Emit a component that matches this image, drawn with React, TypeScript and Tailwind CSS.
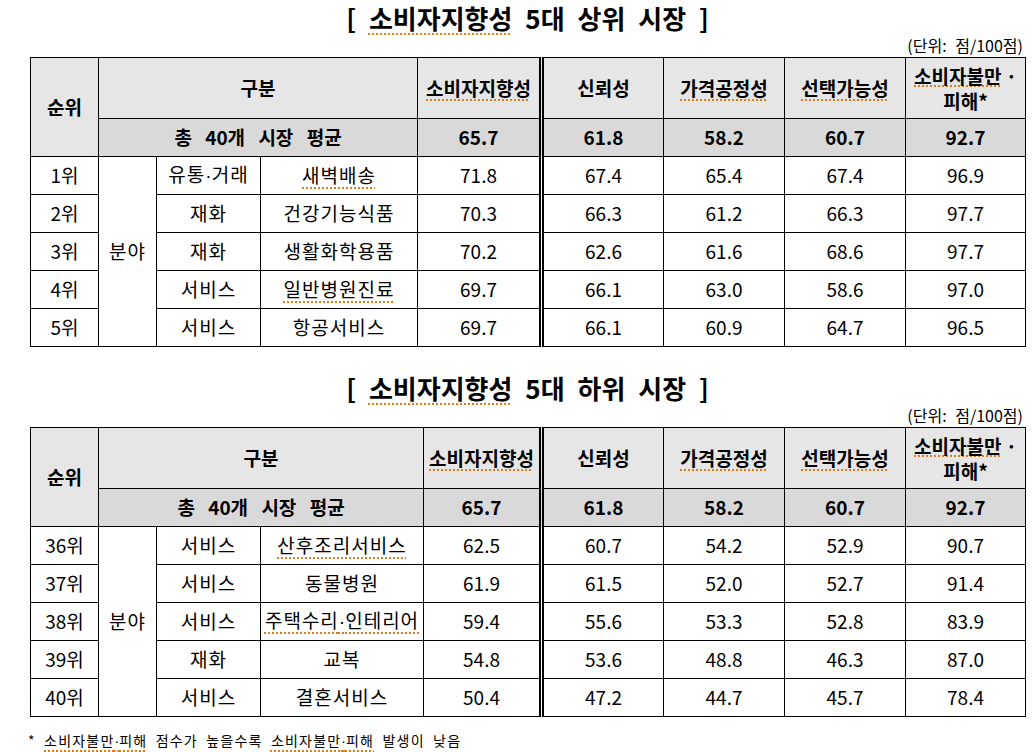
import React from "react"

type Row = {
  rank: string
  type: string
  market: string
  mark?: boolean
  vals: string[]
}

const upper: Row[] = [
  { rank: "1위", type: "유통·거래", market: "새벽배송", mark: true, vals: ["71.8", "67.4", "65.4", "67.4", "96.9"] },
  { rank: "2위", type: "재화", market: "건강기능식품", vals: ["70.3", "66.3", "61.2", "66.3", "97.7"] },
  { rank: "3위", type: "재화", market: "생활화학용품", vals: ["70.2", "62.6", "61.6", "68.6", "97.7"] },
  { rank: "4위", type: "서비스", market: "일반병원진료", mark: true, vals: ["69.7", "66.1", "63.0", "58.6", "97.0"] },
  { rank: "5위", type: "서비스", market: "항공서비스", vals: ["69.7", "66.1", "60.9", "64.7", "96.5"] },
]

const lower: Row[] = [
  { rank: "36위", type: "서비스", market: "산후조리서비스", mark: true, vals: ["62.5", "60.7", "54.2", "52.9", "90.7"] },
  { rank: "37위", type: "서비스", market: "동물병원", vals: ["61.9", "61.5", "52.0", "52.7", "91.4"] },
  { rank: "38위", type: "서비스", market: "주택수리·인테리어", mark: true, vals: ["59.4", "55.6", "53.3", "52.8", "83.9"] },
  { rank: "39위", type: "재화", market: "교복", vals: ["54.8", "53.6", "48.8", "46.3", "87.0"] },
  { rank: "40위", type: "서비스", market: "결혼서비스", vals: ["50.4", "47.2", "44.7", "45.7", "78.4"] },
]

const avg = ["65.7", "61.8", "58.2", "60.7", "92.7"]

// orange dotted "spell check" underline seen in the source document
const mark = "underline decoration-dotted decoration-[#e07b1a] decoration-[1.5px] underline-offset-[4px]"

const cell = "border border-black text-center align-middle p-0"
const dbl = "border-r-[5px] [border-right-style:double]"

// the CJK font draws · full width; the source uses a narrow one
function Dots({ text }: { text: string }) {
  const parts = text.split("·")
  return (
    <>
      {parts.map((p, i) => (
        <React.Fragment key={i}>
          {i > 0 && <span className="font-['Liberation_Sans',sans-serif] tracking-normal">·</span>}
          {p}
        </React.Fragment>
      ))}
    </>
  )
}

function Marked({ on, children }: { on?: boolean; children: React.ReactNode }) {
  return <span className={on ? mark : ""}>{children}</span>
}

function RankTable({ title, rows, wide }: { title: string; rows: Row[]; wide: boolean }) {
  return (
    <section className="flex flex-col">
      <h2 className="w-[995px] h-[36px] text-center text-[26px] leading-[36px] font-bold [word-spacing:7px]">
        [ <span className={mark}>소비자지향성</span> 5대 {title} 시장 ]
      </h2>
      <div className="w-[995px] h-[20px] text-right text-[16px] leading-[18px] pr-[2px] [word-spacing:5px]">(단위: 점/100점)</div>
      <table className="table-fixed border-collapse w-[995px] text-[19px] mt-[1px]">
        <colgroup>
          <col className="w-[68px]" />
          <col className="w-[58px]" />
          <col className="w-[104px]" />
          <col className={wide ? "w-[157px]" : "w-[163px]"} />
          <col className={wide ? "w-[124px]" : "w-[118px]"} />
          <col className="w-[122px]" />
          <col className="w-[121px]" />
          <col className="w-[121px]" />
          <col className="w-[120px]" />
        </colgroup>
        <thead>
          <tr className="h-[61px] bg-[#e6e6e6] font-bold">
            <td rowSpan={2} className={cell}>순위</td>
            <td colSpan={3} className={cell}>구분</td>
            <td className={`${cell} ${dbl}`}><Marked on>소비자지향성</Marked></td>
            <td className={cell}>신뢰성</td>
            <td className={cell}><Marked on>가격공정성</Marked></td>
            <td className={cell}><Marked on>선택가능성</Marked></td>
            <td className={cell}>
              <div className="flex flex-col items-center gap-[1px] leading-[24px]">
                <span>
                  <span className="underline decoration-dotted decoration-[#e07b1a] decoration-[1.5px] underline-offset-[2px]">소비자불만</span> ·
                </span>
                <span>피해*</span>
              </div>
            </td>
          </tr>
          <tr className="h-[38px] bg-[#d9d9d9] font-bold">
            <td colSpan={3} className={`${cell} [word-spacing:9px]`}>총 40개 시장 평균</td>
            {avg.map((v, i) => (
              <td key={i} className={`${cell} ${i === 0 ? dbl : ""}`}>{v}</td>
            ))}
          </tr>
        </thead>
        <tbody>
          {rows.map((r, idx) => (
            <tr key={r.rank} className="h-[38px]">
              <td className={cell}>{r.rank}</td>
              {idx === 0 && (
                <td rowSpan={rows.length} className={`${cell} tracking-[1px]`}>분야</td>
              )}
              <td className={`${cell} tracking-[1px]`}><Dots text={r.type} /></td>
              <td className={`${cell} tracking-[1px]`}>
                <Marked on={r.mark}><Dots text={r.market} /></Marked>
              </td>
              {r.vals.map((v, i) => (
                <td key={i} className={`${cell} ${i === 0 ? dbl : ""}`}>{v}</td>
              ))}
            </tr>
          ))}
        </tbody>
      </table>
    </section>
  )
}

export default function App() {
  return (
    <div className="w-[1036px] h-[752px] bg-white text-black font-['Noto_Sans_CJK_KR',sans-serif] pl-[30px] flex flex-col">
      <RankTable title="상위" rows={upper} wide />
      <div className="h-[23px]" />
      <RankTable title="하위" rows={lower} wide={false} />
      <p className="mt-[14px] text-[14px] leading-[18px] tracking-[1.2px] [word-spacing:4px] -ml-[2px]">
        * <span className={mark}><Dots text="소비자불만·피해" /></span> 점수가 높을수록{" "}
        <span className={mark}><Dots text="소비자불만·피해" /></span> 발생이 낮음
      </p>
    </div>
  )
}
